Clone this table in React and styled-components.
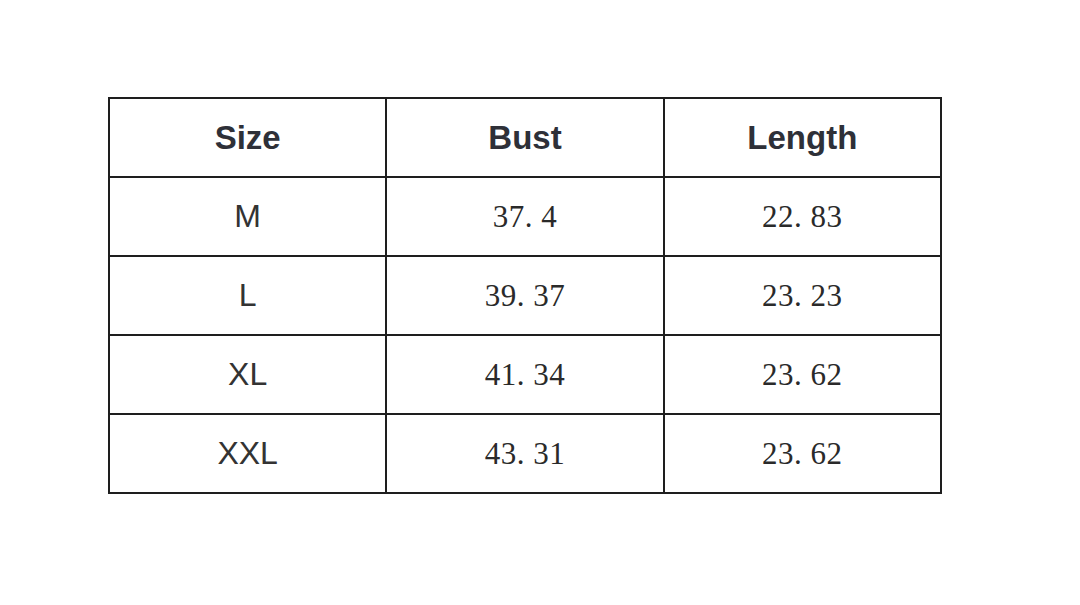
import React from 'react';
import styled, { createGlobalStyle } from 'styled-components';

const Global = createGlobalStyle`
	html, body {
		margin: 0;
		padding: 0;
		background: #fff;
	}
	body {
		width: 1080px;
		height: 605px;
		overflow: hidden;
	}
`;

const Page = styled.div`
	padding: 97px 0 0 108px;
`;

const Table = styled.table`
	border-collapse: collapse;
	width: 834px;
	table-layout: fixed;
`;

const Cell = styled.td`
	border: 2px solid #1e1e1e;
	height: ${p => (p.head ? 77 : 77)}px;
	padding: 0;
	text-align: center;
	vertical-align: middle;
	font-family: ${p => (p.num ? '"Liberation Serif", serif' : '"Liberation Sans", Arial, sans-serif')};
	font-size: ${p => (p.head ? 33 : p.num ? 31 : 32)}px;
	font-weight: ${p => (p.head ? 700 : 400)};
	color: ${p => (p.head ? '#2e3038' : p.num ? '#2a2a2a' : '#333')};
	letter-spacing: ${p => (p.num ? '0.5px' : '0')};
`;

const rows = [
	['M', '37. 4', '22. 83'],
	['L', '39. 37', '23. 23'],
	['XL', '41. 34', '23. 62'],
	['XXL', '43. 31', '23. 62'],
];

export default function App() {
	return (
		<>
			<Global />
			<Page>
				<Table>
					<tbody>
						<tr>
							<Cell head>Size</Cell>
							<Cell head>Bust</Cell>
							<Cell head>Length</Cell>
						</tr>
						{rows.map(([size, bust, length]) => (
							<tr key={size}>
								<Cell>{size}</Cell>
								<Cell num>{bust}</Cell>
								<Cell num>{length}</Cell>
							</tr>
						))}
					</tbody>
				</Table>
			</Page>
		</>
	);
}
